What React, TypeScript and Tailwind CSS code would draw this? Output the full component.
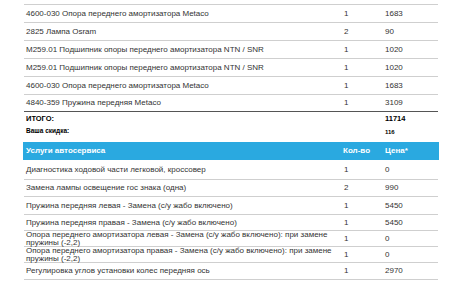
const parts = [
  { name: '4600-030 Опора переднего амортизатора Metaco', qty: '1', price: '1683' },
  { name: '2825 Лампа Osram', qty: '2', price: '90' },
  { name: 'M259.01 Подшипник опоры переднего амортизатора NTN / SNR', qty: '1', price: '1020' },
  { name: 'M259.01 Подшипник опоры переднего амортизатора NTN / SNR', qty: '1', price: '1020' },
  { name: '4600-030 Опора переднего амортизатора Metaco', qty: '1', price: '1683' },
]

const services = [
  { name: 'Диагностика ходовой части легковой, кроссовер', qty: '1', price: '0', h: 'h-[20px]' },
  { name: 'Замена лампы освещение гос знака (одна)', qty: '2', price: '990', h: 'h-[17px]' },
  { name: 'Пружина передняя левая - Замена (с/у жабо включено)', qty: '1', price: '5450', h: 'h-[18px]' },
  { name: 'Пружина передняя правая - Замена (с/у жабо включено)', qty: '1', price: '5450', h: 'h-[16px]' },
  { name: 'Опора переднего амортизатора левая - Замена (с/у жабо включено): при замене пружины (-2,2)', qty: '1', price: '0', h: 'h-[16px]' },
  { name: 'Опора переднего амортизатора правая - Замена (с/у жабо включено): при замене пружины (-2,2)', qty: '1', price: '0', h: 'h-[16px]' },
  { name: 'Регулировка углов установки колес передняя ось', qty: '1', price: '2970', h: 'h-[17px]' },
]

const grid = 'grid grid-cols-[318px_42px_1fr] items-center'

export default function App() {
  return (
    <div className="w-[456px] h-[287px] overflow-hidden bg-white font-['Liberation_Sans',Arial,sans-serif] text-[#333]">
      <div className="ml-[24px] w-[414px] pt-[4px]">
        <div className="border-t border-[#cfcfcf]">
          {parts.map((p, i) => (
            <div key={i} className={`${grid} h-[18px] border-b border-[#cfcfcf] text-[8px] leading-none`}>
              <span className="pl-[2px]">{p.name}</span>
              <span className="pl-[2px]">{p.qty}</span>
              <span className="pl-[1px]">{p.price}</span>
            </div>
          ))}
          <div className={`${grid} h-[17px] border-b border-[#555] text-[8px] leading-none`}>
            <span className="pl-[2px]">4840-359 Пружина передняя Metaco</span>
            <span className="pl-[2px]">1</span>
            <span className="pl-[1px]">3109</span>
          </div>
        </div>
        <div className={`${grid} h-[13px] font-bold text-black`}>
          <span className="pl-[2px] text-[7.5px] leading-none">ИТОГО:</span>
          <span />
          <span className="pl-[1px] text-[7.5px] leading-none">11714</span>
        </div>
        <div className={`${grid} h-[13px] font-bold text-black`}>
          <span className="pl-[2px] text-[6.5px] leading-none">Ваша скидка:</span>
          <span />
          <span className="pl-[1px] text-[6px] leading-none">116</span>
        </div>
        <div className="mt-[4px] -mx-[1px]">
          <div className={`${grid} h-[18px] bg-[#2aa9e0] text-white font-bold text-[8px] leading-none`}>
            <span className="pl-[3px]">Услуги автосервиса</span>
            <span className="pl-[2px]">Кол-во</span>
            <span className="pl-[2px]">Цена*</span>
          </div>
        </div>
        {services.map((s, i) => (
          <div key={i} className={`${grid} ${s.h} border-b border-[#cfcfcf] text-[8px] leading-[8px]`}>
            <span className="pl-[2px] pr-[2px]">{s.name}</span>
            <span className="pl-[2px]">{s.qty}</span>
            <span className="pl-[1px]">{s.price}</span>
          </div>
        ))}
      </div>
    </div>
  )
}
